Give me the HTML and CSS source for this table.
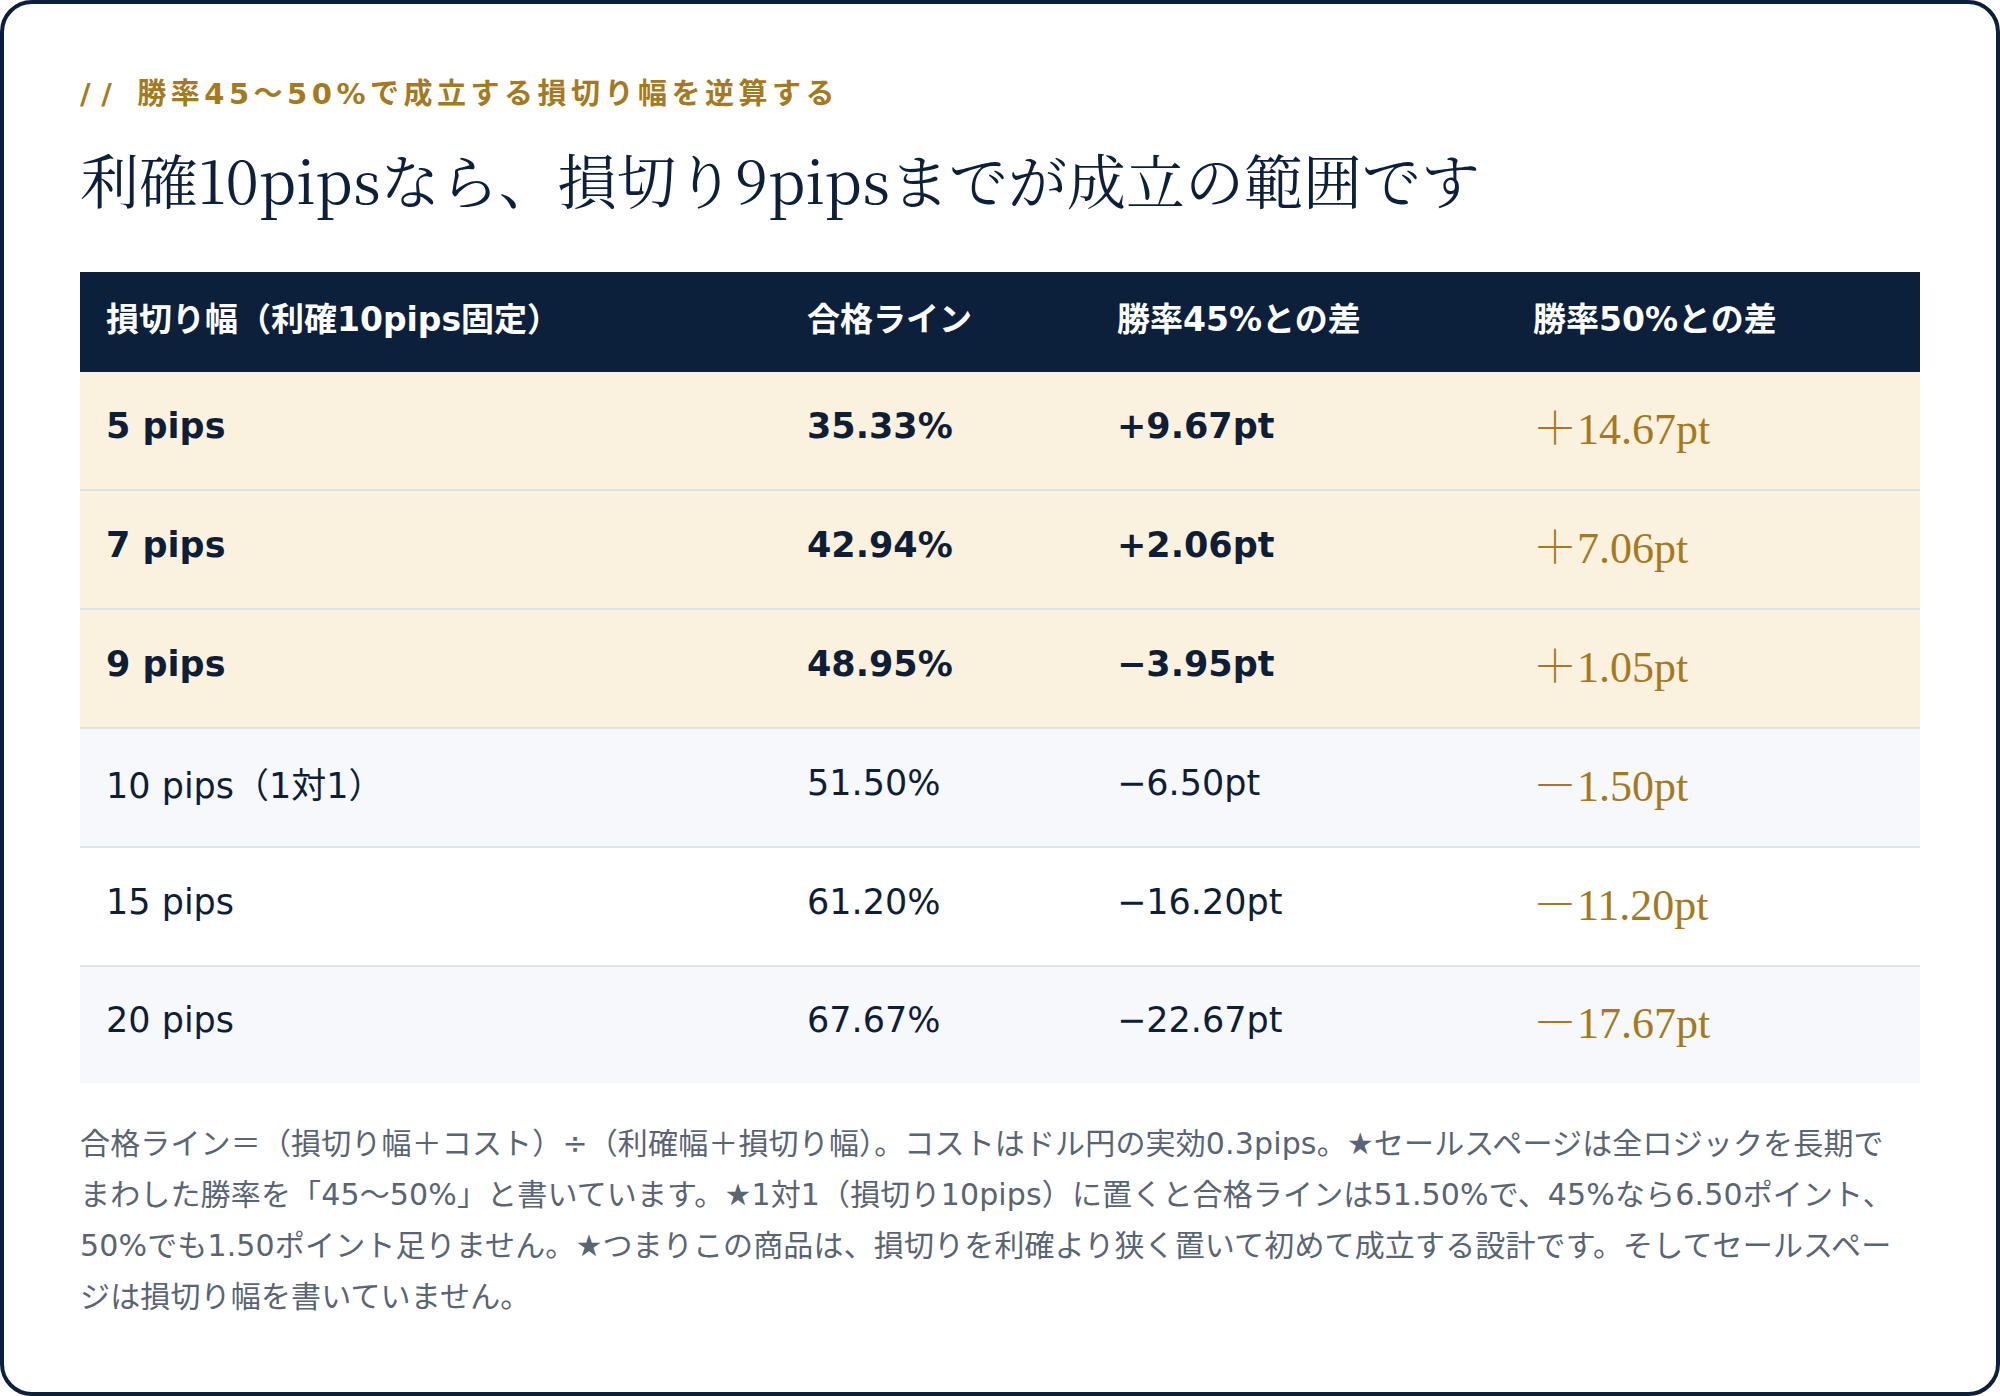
FILE: index.html
```html
<!DOCTYPE html>
<html lang="ja">
<head>
<meta charset="utf-8">
<title>損切り幅の逆算</title>
<link rel="stylesheet" href="styles.css">
</head>
<body>
<section class="card">
  <p class="eyebrow"><span class="slashes">//</span> 勝率45～50%で成立する損切り幅を逆算する</p>
  <h1 class="title">利確10pipsなら、損切り9pipsまでが成立の範囲です</h1>
  <div class="table">
    <div class="row head">
      <div class="cell">損切り幅（利確10pips固定）</div>
      <div class="cell">合格ライン</div>
      <div class="cell">勝率45%との差</div>
      <div class="cell">勝率50%との差</div>
    </div>
    <div class="row ok">
      <div class="cell">5 pips</div>
      <div class="cell">35.33%</div>
      <div class="cell">+9.67pt</div>
      <div class="cell gold">＋14.67pt</div>
    </div>
    <div class="row ok">
      <div class="cell">7 pips</div>
      <div class="cell">42.94%</div>
      <div class="cell">+2.06pt</div>
      <div class="cell gold">＋7.06pt</div>
    </div>
    <div class="row ok">
      <div class="cell">9 pips</div>
      <div class="cell">48.95%</div>
      <div class="cell">−3.95pt</div>
      <div class="cell gold">＋1.05pt</div>
    </div>
    <div class="row alt">
      <div class="cell">10 pips（1対1）</div>
      <div class="cell">51.50%</div>
      <div class="cell">−6.50pt</div>
      <div class="cell gold">－1.50pt</div>
    </div>
    <div class="row">
      <div class="cell">15 pips</div>
      <div class="cell">61.20%</div>
      <div class="cell">−16.20pt</div>
      <div class="cell gold">－11.20pt</div>
    </div>
    <div class="row alt last">
      <div class="cell">20 pips</div>
      <div class="cell">67.67%</div>
      <div class="cell">−22.67pt</div>
      <div class="cell gold">－17.67pt</div>
    </div>
  </div>
  <p class="note">合格ライン＝（損切り幅＋コスト）÷（利確幅＋損切り幅）。コストはドル円の実効0.3pips。★セールスページは全ロジックを長期でまわした勝率を「45～50%」と書いています。★1対1（損切り10pips）に置くと合格ラインは51.50%で、45%なら6.50ポイント、50%でも1.50ポイント足りません。★つまりこの商品は、損切りを利確より狭く置いて初めて成立する設計です。そしてセールスページは損切り幅を書いていません。</p>
</section>
</body>
</html>
```
FILE: styles.css
```css
body {
  margin: 0;
  background: #ffffff;
}

.card {
  box-sizing: border-box;
  width: 2000px;
  height: 1396px;
  border: 4px solid #0c1f3b;
  border-radius: 32px;
  padding: 70px 76px 0;
  font-family: "DejaVu Sans", "Noto Sans CJK JP", sans-serif;
  color: #0c1f3b;
  background: #ffffff;
}

.eyebrow {
  margin: 0;
  font-size: 29px;
  line-height: 40px;
  font-weight: 700;
  letter-spacing: 0.155em;
  color: #a57a1f;
}

.slashes {
  letter-spacing: 0.37em;
}

.title {
  margin: 23px 0 0;
  font-family: "Noto Serif CJK JP", "Liberation Serif", serif;
  font-size: 59px;
  line-height: 83px;
  font-weight: 400;
  color: #0c1f3b;
}

.table {
  margin-top: 52px;
  width: 1840px;
}

.row {
  display: grid;
  grid-template-columns: 701px 310px 416px 413px;
  align-items: center;
  height: 117px;
  border-bottom: 2px solid #dde3ea;
  background: #ffffff;
  font-size: 35px;
  color: #0e1e37;
}

.row.last {
  border-bottom: none;
  height: 116px;
}

.row.head {
  height: 100px;
  border-bottom: none;
  background: #0c1f3b;
  color: #ffffff;
  font-size: 33px;
  font-weight: 700;
}

.row.ok {
  background: #fbf1df;
  font-weight: 700;
}

.row.alt {
  background: #f6f8fb;
}

.cell {
  padding: 0 26px 10px;
  white-space: nowrap;
}

.cell.gold {
  padding-bottom: 12px;
  font-family: "Liberation Serif", "Noto Serif CJK JP", serif;
  font-weight: 400;
  font-size: 44px;
  color: #a57a1f;
}

.note {
  margin: 35px 0 0;
  max-width: 1824px;
  font-size: 30px;
  line-height: 51px;
  letter-spacing: 0.005em;
  color: #5a6474;
}
```
